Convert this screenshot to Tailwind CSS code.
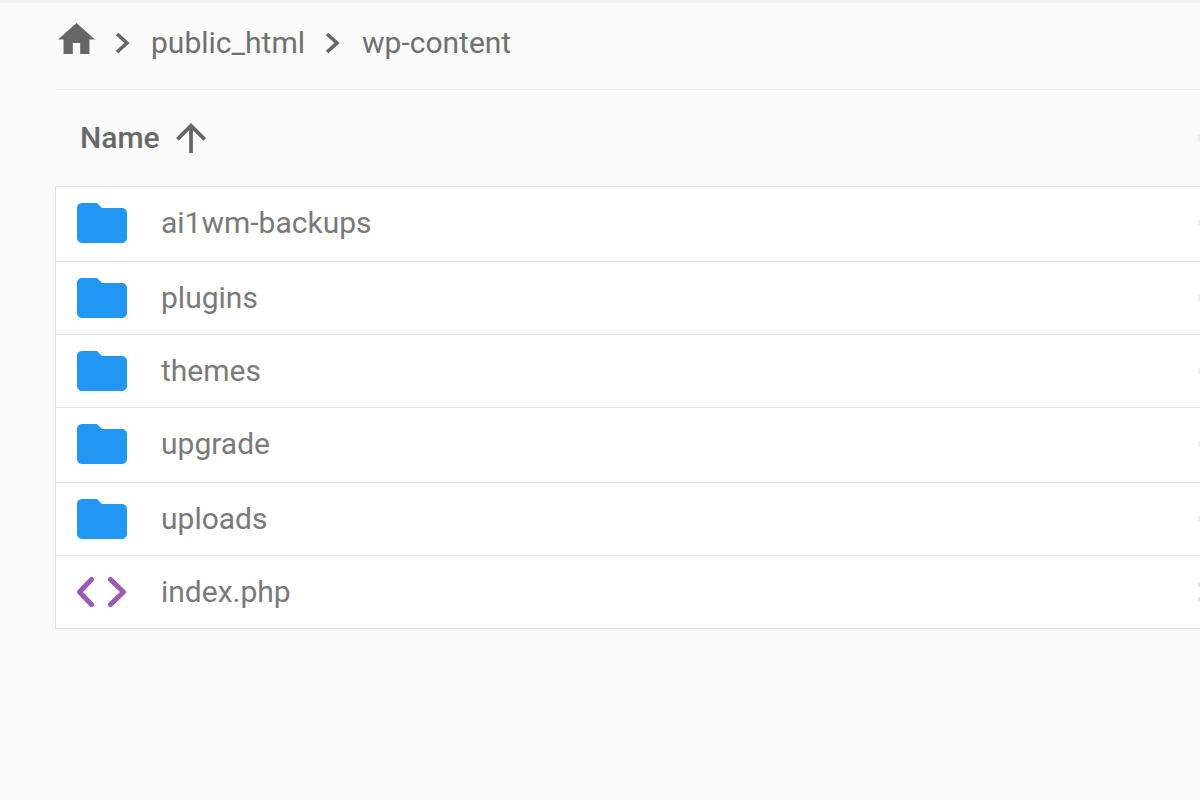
<!DOCTYPE html>
<html>
<head>
<meta charset="utf-8">
<script src="https://cdn.jsdelivr.net/npm/@tailwindcss/browser@4"></script>
</head>
<body class="bg-[#fafafa] overflow-hidden font-['Roboto',sans-serif] text-[#707070]">
<div class="w-[1200px] h-[800px] overflow-hidden">
  <div class="h-[3px] bg-[#f3f3f3]"></div>
  <div class="pl-[55px]">
  <div class="h-[87px] border-b border-[#f0f0f0] flex items-center text-[30px] leading-none pb-[7px]">
    <svg class="w-[37px] h-[31px] ml-[3px] -mt-[9px]" viewBox="2 3 20 17" preserveAspectRatio="none" fill="#666"><path d="M10 20v-6h4v6h5v-8h3L12 3 2 12h3v8z"/></svg>
    <svg class="w-[15px] h-[22px] ml-[20px]" viewBox="0 0 15 22" fill="none" stroke="#666" stroke-width="3.6"><path d="M2 2l10 9-10 9"/></svg>
    <span class="ml-[21px]">public_html</span>
    <svg class="w-[15px] h-[22px] ml-[20px]" viewBox="0 0 15 22" fill="none" stroke="#666" stroke-width="3.6"><path d="M2 2l10 9-10 9"/></svg>
    <span class="ml-[22px]">wp-content</span>
  </div>
  <div class="h-[96px] flex items-center pl-[25px] pb-[1px] text-[30px] leading-none font-medium text-[#696969]">
    <span>Name</span>
    <svg class="w-[30px] h-[30px] ml-[16px]" viewBox="4 4 16 16" fill="#666"><path d="M4 12l1.41 1.41L11 7.830V20h2V7.830l5.580 5.590L20 12l-8-8-8 8z"/></svg>
    <span class="ml-auto w-[2px] h-[6px] bg-[#eeeeee]"></span>
  </div>
  <div class="bg-white border border-r-0 border-[#e0e0e0] text-[30px] leading-none text-[#7a7a7a]">
    <div class="h-[75px] flex items-center border-b border-[#e3e3e3] pl-[21px] pb-[2px]">
      <svg class="w-[50px] h-[40px]" viewBox="2 4 20 16" preserveAspectRatio="none" fill="#2196f3"><path d="M10 4H4c-1.1 0-2 .9-2 2v12c0 1.100.9 2 2 2h16c1.100 0 2-.9 2-2V8c0-1.100-.9-2-2-2h-8l-2-2z"/></svg>
      <span class="ml-[34px]">ai1wm-backups</span>
      <span class="ml-auto w-[2px] h-[6px] bg-[#eeeeee]"></span>
    </div>
    <div class="h-[73px] flex items-center border-b border-[#e3e3e3] pl-[21px]">
      <svg class="w-[50px] h-[40px]" viewBox="2 4 20 16" preserveAspectRatio="none" fill="#2196f3"><path d="M10 4H4c-1.1 0-2 .9-2 2v12c0 1.100.9 2 2 2h16c1.100 0 2-.9 2-2V8c0-1.100-.9-2-2-2h-8l-2-2z"/></svg>
      <span class="ml-[34px]">plugins</span>
      <span class="ml-auto w-[2px] h-[6px] bg-[#eeeeee]"></span>
    </div>
    <div class="h-[73px] flex items-center border-b border-[#e3e3e3] pl-[21px]">
      <svg class="w-[50px] h-[40px]" viewBox="2 4 20 16" preserveAspectRatio="none" fill="#2196f3"><path d="M10 4H4c-1.1 0-2 .9-2 2v12c0 1.100.9 2 2 2h16c1.100 0 2-.9 2-2V8c0-1.100-.9-2-2-2h-8l-2-2z"/></svg>
      <span class="ml-[34px]">themes</span>
      <span class="ml-auto w-[2px] h-[6px] bg-[#eeeeee]"></span>
    </div>
    <div class="h-[75px] flex items-center border-b border-[#e3e3e3] pl-[21px] pb-[2px]">
      <svg class="w-[50px] h-[40px]" viewBox="2 4 20 16" preserveAspectRatio="none" fill="#2196f3"><path d="M10 4H4c-1.1 0-2 .9-2 2v12c0 1.100.9 2 2 2h16c1.100 0 2-.9 2-2V8c0-1.100-.9-2-2-2h-8l-2-2z"/></svg>
      <span class="ml-[34px]">upgrade</span>
      <span class="ml-auto w-[2px] h-[6px] bg-[#eeeeee]"></span>
    </div>
    <div class="h-[73px] flex items-center border-b border-[#e3e3e3] pl-[21px]">
      <svg class="w-[50px] h-[40px]" viewBox="2 4 20 16" preserveAspectRatio="none" fill="#2196f3"><path d="M10 4H4c-1.1 0-2 .9-2 2v12c0 1.100.9 2 2 2h16c1.100 0 2-.9 2-2V8c0-1.100-.9-2-2-2h-8l-2-2z"/></svg>
      <span class="ml-[34px]">uploads</span>
      <span class="ml-auto w-[2px] h-[6px] bg-[#eeeeee]"></span>
    </div>
    <div class="h-[72px] flex items-center pl-[21px]">
      <svg class="w-[50px] h-[40px]" viewBox="0 0 50 40" fill="none" stroke="#9b59b6" stroke-width="5" stroke-linecap="round" stroke-linejoin="round"><path d="M14.500 7.500 2.500 20l12 12.500"/><path d="M33.500 7.500l13 12.500-13 12.500"/></svg>
      <span class="ml-[34px]">index.php</span>
      <span class="ml-auto w-[2px] h-[18px] border-y-[4px] border-[#e4e4e4]"></span>
    </div>
  </div>
  </div>
</div>
</body>
</html>
